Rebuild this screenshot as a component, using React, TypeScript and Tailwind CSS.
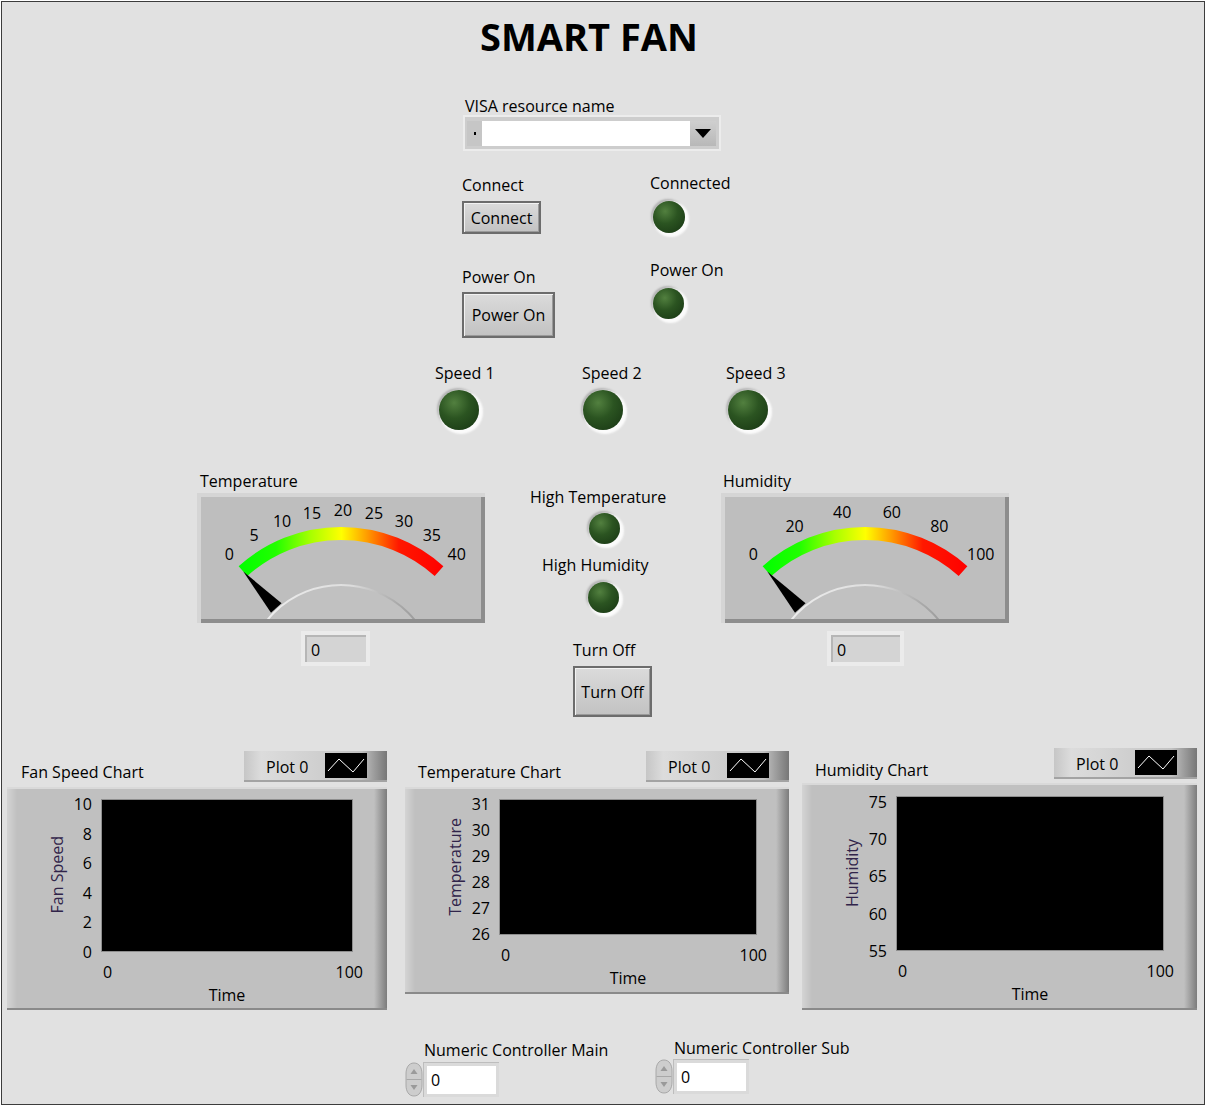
import { useId } from "react";

function Label({ text, className = "" }: { text: string; className?: string }) {
  return <div className={"whitespace-nowrap text-[16px] leading-5 text-black " + className}>{text}</div>;
}

function Led({ className = "" }: { className?: string }) {
  return (
    <div
      className={
        "rounded-full bg-[radial-gradient(circle_at_38%_32%,#52803f_0%,#2b5421_42%,#163312_100%)] shadow-[2px_2px_2px_2px_#fbfbfb,-1px_-1px_2px_1px_#b2b2b2] " +
        className
      }
    />
  );
}

function LvButton({ text, className = "" }: { text: string; className?: string }) {
  return (
    <div
      className={
        "flex items-center justify-center border-2 border-[#6c6c6c] bg-[linear-gradient(#dbdbdb,#c2c2c2)] text-[16px] leading-5 text-black shadow-[inset_1px_1px_0_#f2f2f2,inset_-1px_-1px_0_#9a9a9a] " +
        className
      }
    >
      {text}
    </div>
  );
}

function NumIndicator({ className = "" }: { className?: string }) {
  return (
    <div className={"flex h-[35px] bg-[#ebebeb] p-[4px] " + className}>
      <div className="flex flex-1 items-center border-l-2 border-t-2 border-[#b6b6b6] bg-[#d4d4d4] pl-[4px] text-[16px] leading-5 text-black">
        0
      </div>
    </div>
  );
}

function Spinner() {
  return (
    <svg width="18" height="35" viewBox="0 0 18 35">
      <path
        d="M9 1 C3.5 1 1 6 1 12 L1 23 C1 29 3.5 34 9 34 C14.5 34 17 29 17 23 L17 12 C17 6 14.5 1 9 1Z"
        fill="#cdcdcd"
        stroke="#a8a8a8"
      />
      <line x1="1.5" y1="17.5" x2="16.5" y2="17.5" stroke="#a8a8a8" />
      <path d="M5.5 12 L9 7 L12.5 12Z" fill="#9a9a9a" />
      <path d="M5.5 23 L9 28 L12.5 23Z" fill="#9a9a9a" />
    </svg>
  );
}

function NumControl({ className = "" }: { className?: string }) {
  return (
    <div className={"flex h-[35px] items-center " + className}>
      <Spinner />
      <div className="flex h-[35px] w-[76px] border-l border-t border-[#bdbdbd] bg-[#dadada] p-[3px]">
        <div className="flex flex-1 items-center bg-white pl-[4px] text-[16px] leading-5 text-black">0</div>
      </div>
    </div>
  );
}

function Gauge({ max, step }: { max: number; step: number }) {
  const id = useId().replace(/:/g, "");
  const cx = 144;
  const cy = 187;
  const pt = (deg: number, r: number) => {
    const a = (deg * Math.PI) / 180;
    return [cx + r * Math.sin(a), cy - r * Math.cos(a)];
  };
  const ang = (v: number) => -42 + (84 * v) / max;
  const [sx, sy] = pt(-42, 146.5);
  const [ex, ey] = pt(42, 146.5);
  const tip = pt(-42, 146);
  const b1 = pt(-46.2, 97);
  const b2 = pt(-37.8, 97);
  const ticks: number[] = [];
  for (let v = 0; v <= max; v += step) ticks.push(v);

  return (
    <div className="h-[130px] w-[288px] bg-[#bebebe] shadow-[inset_4px_4px_0_#d5d5d5,inset_-4px_-4px_0_#8d8d8d]">
      <svg width="288" height="130" viewBox="0 0 288 130">
        <defs>
          <linearGradient id={id + "band"} gradientUnits="userSpaceOnUse" x1="42" y1="0" x2="247" y2="0">
            <stop offset="0" stopColor="#00ff00" />
            <stop offset="0.18" stopColor="#22ff00" />
            <stop offset="0.35" stopColor="#a8ff00" />
            <stop offset="0.5" stopColor="#ffff00" />
            <stop offset="0.62" stopColor="#ffa000" />
            <stop offset="0.78" stopColor="#ff1800" />
            <stop offset="1" stopColor="#ff0000" />
          </linearGradient>
          <linearGradient id={id + "hub"} gradientUnits="userSpaceOnUse" x1="49" y1="0" x2="239" y2="0">
            <stop offset="0" stopColor="#f0f0f0" />
            <stop offset="0.55" stopColor="#dedede" />
            <stop offset="0.8" stopColor="#a9a9a9" />
            <stop offset="1" stopColor="#8e8e8e" />
          </linearGradient>
          <clipPath id={id + "clip"}>
            <rect x="4" y="4" width="280" height="122" />
          </clipPath>
        </defs>
        <g clipPath={`url(#${id}clip)`}>
          <circle cx={cx} cy={cy} r="95" fill="#c1c1c1" stroke={`url(#${id}hub)`} strokeWidth="2" />
        </g>
        <path
          d={`M ${sx} ${sy} A 146.5 146.5 0 0 1 ${ex} ${ey}`}
          fill="none"
          stroke={`url(#${id}band)`}
          strokeWidth="13"
        />
        <polygon points={`${tip[0]},${tip[1]} ${b1[0]},${b1[1]} ${b2[0]},${b2[1]}`} fill="#000" />
        {ticks.map((v) => {
          const [x, y] = pt(ang(v), 170);
          return (
            <text
              key={v}
              x={x + 2}
              y={y}
              textAnchor="middle"
              dominantBaseline="central"
              fontSize="16"
              fontFamily="'Open Sans', sans-serif"
              fill="#000"
            >
              {v}
            </text>
          );
        })}
      </svg>
    </div>
  );
}

function Legend() {
  return (
    <div className="flex h-[31px] w-[143px] items-center bg-[linear-gradient(to_right,#c6c6c6,#dcdcdc_12%,#d0d0d0_50%,#c2c2c2_82%,#777777)] shadow-[inset_0_-2px_0_#a3a3a3]">
      <div className="w-[81px] pl-[22px] text-[16px] leading-5 text-black">Plot 0</div>
      <svg width="42" height="25" viewBox="0 0 42 25" className="mb-[2px]">
        <rect width="42" height="25" fill="#000" />
        <polyline points="3,18 14,6 28,19 39,6" fill="none" stroke="#fff" strokeWidth="1" />
      </svg>
    </div>
  );
}

type ChartProps = {
  title: string;
  yTitle: string;
  yTicks: string[];
  className?: string;
  headerClass: string;
  titleClass: string;
  frameClass: string;
  padClass: string;
  plotClass: string;
  tickClass: string;
  xRowClass: string;
  timeClass: string;
};

function Chart(p: ChartProps) {
  return (
    <div className={"flex flex-col " + (p.className ?? "")}>
      <div className={"flex items-start " + p.headerClass}>
        <Label text={p.title} className={p.titleClass} />
        <div className="ml-auto">
          <Legend />
        </div>
      </div>
      <div
        className={
          "flex flex-col border-b-2 border-t-2 border-b-[#8a8a8a] border-t-[#d9d9d9] bg-[linear-gradient(to_right,#d4d4d4,#c0c0c0_10px,#c0c0c0_calc(100%-13px),#7c7c7c)] " +
          p.frameClass
        }
      >
        <div className={"flex " + p.padClass}>
          <div className="flex w-[94px] pl-[40px]">
            <div className="flex w-[20px] items-center justify-center">
              <span className="rotate-180 whitespace-nowrap text-[16px] font-medium leading-5 text-[#30244a] [writing-mode:vertical-rl]">
                {p.yTitle}
              </span>
            </div>
            <div
              className={
                "mb-[-10px] mt-[-4.5px] flex w-[25px] flex-col justify-between text-right text-[16px] leading-5 text-black " +
                p.tickClass
              }
            >
              {p.yTicks.map((t) => (
                <span key={t}>{t}</span>
              ))}
            </div>
          </div>
          <div className={"border border-[#8e8e8e] bg-black " + p.plotClass} />
        </div>
        <div className={"ml-[94px] mt-[10px] flex justify-between text-[16px] leading-5 text-black " + p.xRowClass}>
          <span className="pl-[2px]">0</span>
          <span>100</span>
        </div>
        <div className={"ml-[94px] mt-[3px] text-center text-[16px] leading-5 text-black " + p.timeClass}>Time</div>
      </div>
    </div>
  );
}

export default function App() {
  return (
    <div className="h-[1107px] w-[1206px] bg-white pl-px pt-px [font-family:'Open_Sans','Noto_Sans',sans-serif]">
      <div className="flex h-[1104px] w-[1204px] flex-col border border-[#3c3c3c] bg-[#e1e1e1]">
        {/* title */}
        <div className="ml-[478px] mt-[15px] whitespace-nowrap text-[38px] font-bold leading-[38px] text-black">
          SMART FAN
        </div>

        {/* VISA resource */}
        <div className="ml-[461px] mt-[41px] flex flex-col">
          <Label text="VISA resource name" className="pl-[2px]" />
          <div className="mt-[-1px] flex h-[36px] w-[258px] border-2 border-[#ececec] bg-[#cdcdcd] pb-[3px] pl-[2px] pr-[3px] pt-[4px]">
            <div className="flex w-[15px] items-center justify-center bg-[#c6c6c6]">
              <div className="h-[3px] w-[2px] bg-black" />
            </div>
            <div className="flex-1 bg-white" />
            <div className="flex w-[26px] items-center justify-center bg-[linear-gradient(#cfcfcf,#b8b8b8)]">
              <svg width="16" height="9" viewBox="0 0 16 9">
                <polygon points="0,0 16,0 8,9" fill="#000" />
              </svg>
            </div>
          </div>
        </div>

        {/* connect */}
        <div className="mt-[22px] flex items-start">
          <div className="ml-[460px] mt-[2px] flex w-[79px] flex-col">
            <Label text="Connect" />
            <LvButton text="Connect" className="mt-[6px] h-[33px] w-[79px]" />
          </div>
          <div className="ml-[109px] flex flex-col">
            <Label text="Connected" />
            <Led className="ml-[3px] mt-[8px] h-8 w-8" />
          </div>
        </div>

        {/* power on */}
        <div className="mt-[26px] flex items-start">
          <div className="ml-[460px] mt-[7px] flex w-[93px] flex-col">
            <Label text="Power On" />
            <LvButton text="Power On" className="mt-[5px] h-[46px] w-[93px]" />
          </div>
          <div className="ml-[95px] flex flex-col">
            <Label text="Power On" />
            <Led className="ml-[3px] mt-[8px] h-[31px] w-[31px]" />
          </div>
        </div>

        {/* speeds */}
        <div className="mt-[25px] flex items-start">
          <div className="ml-[433px] flex w-[146px] flex-col">
            <Label text="Speed 1" />
            <Led className="ml-[4px] mt-[7px] h-10 w-10" />
          </div>
          <div className="flex w-[145px] flex-col">
            <Label text="Speed 2" className="pl-[1px]" />
            <Led className="ml-[2px] mt-[7px] h-10 w-10" />
          </div>
          <div className="flex flex-col">
            <Label text="Speed 3" />
            <Led className="ml-[2px] mt-[7px] h-10 w-10" />
          </div>
        </div>

        {/* gauges */}
        <div className="mt-[41px] flex items-start">
          <div className="ml-[195px] flex w-[288px] flex-col">
            <Label text="Temperature" className="pl-[3px]" />
            <div className="mt-[2px]">
              <Gauge max={40} step={5} />
            </div>
            <NumIndicator className="ml-[104px] mt-[8px] w-[69px]" />
          </div>
          <div className="ml-[45px] flex w-[191px] flex-col items-start">
            <Label text="High Temperature" className="mt-[16px]" />
            <Led className="ml-[59px] mt-[6px] h-[31px] w-[31px]" />
            <Label text="High Humidity" className="ml-[12px] mt-[11px]" />
            <Led className="ml-[58px] mt-[7px] h-[31px] w-[31px]" />
            <Label text="Turn Off" className="ml-[43px] mt-[27px]" />
            <LvButton text="Turn Off" className="ml-[43px] mt-[6px] h-[51px] w-[79px]" />
          </div>
          <div className="flex w-[288px] flex-col">
            <Label text="Humidity" className="pl-[2px]" />
            <div className="mt-[2px]">
              <Gauge max={100} step={20} />
            </div>
            <NumIndicator className="ml-[106px] mt-[8px] w-[77px]" />
          </div>
        </div>

        {/* charts */}
        <div className="mt-[31px] flex items-start">
          <Chart
            className="ml-[5px] mt-[3px] w-[380px]"
            title="Fan Speed Chart"
            yTitle="Fan Speed"
            yTicks={["10", "8", "6", "4", "2", "0"]}
            headerClass="h-[36px]"
            titleClass="ml-[14px] mt-[11px]"
            frameClass="h-[223px] w-[380px]"
            padClass="pt-[9.5px]"
            plotClass="h-[153px] w-[252px]"
            tickClass="h-[167.5px]"
            xRowClass="w-[262px]"
            timeClass="w-[252px]"
          />
          <Chart
            className="ml-[18px] mt-[3px] w-[384px]"
            title="Temperature Chart"
            yTitle="Temperature"
            yTicks={["31", "30", "29", "28", "27", "26"]}
            headerClass="h-[36px]"
            titleClass="ml-[13px] mt-[11px]"
            frameClass="h-[207px] w-[384px]"
            padClass="pt-[9.5px]"
            plotClass="h-[136px] w-[258px]"
            tickClass="h-[150.5px]"
            xRowClass="w-[268px]"
            timeClass="w-[258px]"
          />
          <Chart
            className="ml-[13px] w-[395px]"
            title="Humidity Chart"
            yTitle="Humidity"
            yTicks={["75", "70", "65", "60", "55"]}
            headerClass="h-[35px]"
            titleClass="ml-[13px] mt-[12px]"
            frameClass="h-[227px] w-[395px]"
            padClass="pt-[11px]"
            plotClass="h-[155px] w-[268px]"
            tickClass="h-[169.5px]"
            xRowClass="w-[278px]"
            timeClass="w-[268px]"
          />
        </div>

        {/* numeric controllers */}
        <div className="mt-[28px] flex items-start">
          <div className="ml-[403px] mt-[2px] flex w-[250px] flex-col">
            <Label text="Numeric Controller Main" className="pl-[19px]" />
            <NumControl className="mt-[2px]" />
          </div>
          <div className="flex flex-col">
            <Label text="Numeric Controller Sub" className="pl-[19px]" />
            <NumControl className="mt-[1px]" />
          </div>
        </div>
      </div>
    </div>
  );
}
